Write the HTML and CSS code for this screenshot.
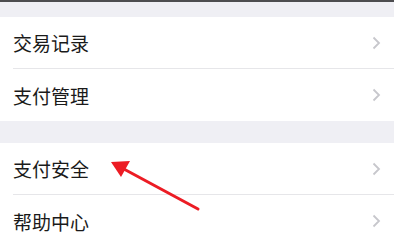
FILE: index.html
```html
<!DOCTYPE html>
<html lang="zh">
<head>
<meta charset="utf-8">
<link rel="stylesheet" href="styles.css">
</head>
<body>
<div class="page">
  <div class="topbar"></div>
  <div class="gap gap-top"></div>
  <div class="group">
    <div class="row"><span class="label">交易记录</span><svg class="chev" width="9" height="14" viewBox="0 0 9 14"><path d="M1.5 1.5 L7 7 L1.5 12.5" fill="none" stroke="#c7c7cc" stroke-width="1.8"/></svg></div>
    <div class="row"><span class="label">支付管理</span><svg class="chev" width="9" height="14" viewBox="0 0 9 14"><path d="M1.5 1.5 L7 7 L1.5 12.5" fill="none" stroke="#c7c7cc" stroke-width="1.8"/></svg></div>
  </div>
  <div class="gap gap-mid"></div>
  <div class="group">
    <div class="row"><span class="label">支付安全</span><svg class="chev" width="9" height="14" viewBox="0 0 9 14"><path d="M1.5 1.5 L7 7 L1.5 12.5" fill="none" stroke="#c7c7cc" stroke-width="1.8"/></svg></div>
    <div class="row"><span class="label">帮助中心</span><svg class="chev" width="9" height="14" viewBox="0 0 9 14"><path d="M1.5 1.5 L7 7 L1.5 12.5" fill="none" stroke="#c7c7cc" stroke-width="1.8"/></svg></div>
  </div>
  <svg class="arrow" width="394" height="242" viewBox="0 0 394 242">
    <line x1="198" y1="209" x2="122" y2="168" stroke="#ec1c24" stroke-width="3" stroke-linecap="round"/>
    <polygon points="111,162 130,161 121,177" fill="#ec1c24"/>
  </svg>
</div>
</body>
</html>
```

FILE: styles.css
```css
html, body {
  margin: 0;
  padding: 0;
  background: #ffffff;
}
.page {
  position: relative;
  width: 394px;
  height: 242px;
  overflow: hidden;
  font-family: "Noto Sans CJK SC", "Noto Sans", sans-serif;
}
.topbar {
  height: 2px;
  background: #4d4d4f;
}
.gap {
  background: #efeff4;
}
.gap-top {
  height: 15px;
}
.gap-mid {
  height: 22px;
}
.group {
  background: #ffffff;
}
.row {
  display: flex;
  align-items: center;
  justify-content: space-between;
  height: 52px;
  margin-left: 13px;
  padding-right: 13px;
  box-sizing: border-box;
  border-bottom: 1px solid #e6e6e9;
}
.row:last-child {
  border-bottom: none;
}
.label {
  font-size: 19px;
  color: #1a1a1a;
  line-height: 1;
}
.chev {
  display: block;
}
.arrow {
  position: absolute;
  left: 0;
  top: 0;
  pointer-events: none;
}
```
